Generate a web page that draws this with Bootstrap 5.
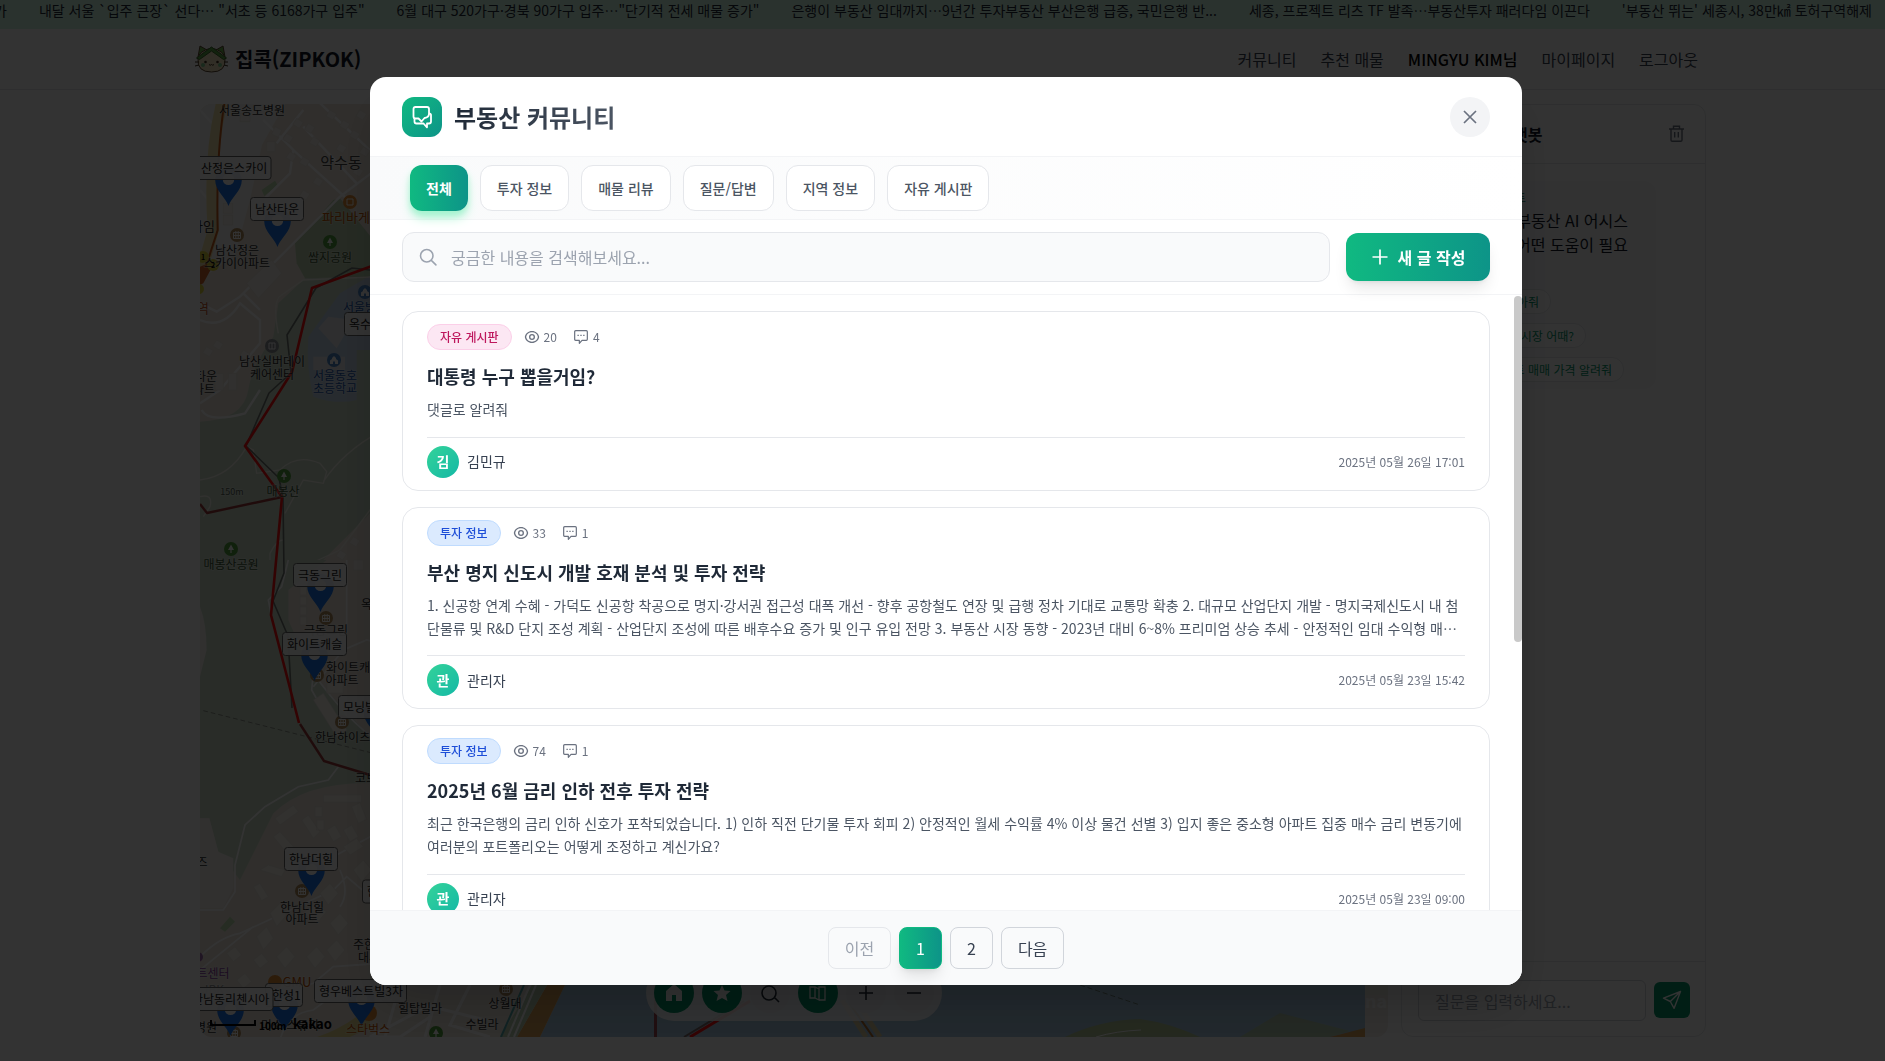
<!DOCTYPE html>
<html lang="ko">
<head>
<meta charset="utf-8">
<meta name="viewport" content="width=device-width, initial-scale=1">
<title>집콕(ZIPKOK)</title>
<link rel="stylesheet" href="https://cdn.jsdelivr.net/npm/bootstrap@5.3.0/dist/css/bootstrap.min.css">
<style>
:root{--kr:"Noto Sans CJK KR","Noto Sans",sans-serif}
body{font-family:var(--kr);height:100vh;overflow:hidden;background:#fff;color:#111827;line-height:1.5}
svg{display:block;flex:none}
.ticker{height:29px;background:#d1fae5;color:#1f2937;font-size:14px;line-height:20px;gap:32px;white-space:nowrap}
.ticker span:first-child{margin-left:-6px}
.topnav{height:61px;border-bottom:1px solid #e5e7eb;padding:0 187px 0 195px}
.brand-name{font-size:20px;font-weight:700;margin-left:7px}
.menu{gap:24px;font-weight:400;color:#374151}
.menu b{font-weight:500;color:#000}
.workspace{padding:14px 179px 24px 200px;height:971px;gap:13px}
.map-wrap{width:1188px;border-radius:12px;overflow:hidden;background:#f3efe8}
.map-wrap text{font-family:var(--kr)}
.chat{width:305px;border:1px solid #e5e7eb;border-radius:12px}
.chat-head{height:59px;border-bottom:1px solid #e5e7eb;padding:0 21px 1px 0}
.chat-head strong{margin-left:91px;font-size:16px}
.bubble{margin:17px 49px 0 17px;height:208px;background:#f9fafb;border-radius:12px;padding:8px 28px 8px 8px;text-align:right;line-height:24px}
.agent{font-size:12px;line-height:17px;color:#047857;padding-right:102px;margin-bottom:2px}
.chip-row{height:34px;display:flex;justify-content:flex-end}
.chip{border:1px solid #e5e7eb;border-radius:12px;background:#fff;height:25px;padding:0 11px;font-size:12px;line-height:23px;color:#059669;white-space:nowrap}
.chat-foot{height:75px;border-top:1px solid #e5e7eb;padding:17px 15px 15px 16px;gap:8px}
.ask{height:41px;border:1px solid #d1d5db;border-radius:6px;padding:0 8px;line-height:40px;color:#9ca3af}
.send{width:36px;height:36px;border-radius:6px;background:#059669}
.veil{position:fixed;inset:0;background:rgba(0,0,0,.8);padding:1px 0 0 7px}
.board{width:1152px;height:908px;background:#fff;border-radius:16px;overflow:hidden;box-shadow:0 25px 50px -12px rgba(0,0,0,.25)}
.board-head{height:80px;border-bottom:1px solid #f3f4f6;padding:1px 32px 0}
.mark-box{width:40px;height:40px;border-radius:12px;background:linear-gradient(135deg,#10b981,#0d9488)}
.board-title{font-size:24px;font-weight:700;line-height:32px;margin:0;background:linear-gradient(90deg,#1f2937,#4b5563);-webkit-background-clip:text;background-clip:text;color:transparent}
.round-x{width:40px;height:40px;border-radius:50%;background:#f3f4f6;color:#6b7280}
.tabs{height:63px;border-bottom:1px solid #f3f4f6;padding:8px 40px;gap:12px;background:linear-gradient(90deg,#f9fafb,#fff)}
.tab-b{height:46px;border:1px solid #e5e7eb;border-radius:12px;background:#fff;padding:0 16px;font-size:14px;font-weight:500;line-height:44px;color:#4b5563;white-space:nowrap}
.tab-b.on{border:0;line-height:46px;background:linear-gradient(90deg,#10b981,#0d9488);color:#fff;font-weight:700;box-shadow:0 4px 6px -1px #a7f3d0,0 8px 12px -2px #a7f3d0}
.finder{height:75px;border-bottom:1px solid #f3f4f6;padding:12px 32px;gap:16px}
.finder-in{height:50px;border:1px solid #e5e7eb;border-radius:12px;background:#f9fafb;color:#9ca3af;padding:0 15px;gap:13px}
.write{width:144px;height:48px;border-radius:12px;background:linear-gradient(90deg,#10b981,#0d9488);color:#fff;font-weight:700;gap:9px;box-shadow:0 10px 15px -3px rgba(0,0,0,.1),0 4px 6px -4px rgba(0,0,0,.1)}
.posts{height:615px;overflow:hidden;position:relative;padding:16px 32px;gap:16px}
.thumb{position:absolute;right:0;top:1px;width:8px;height:346px;border-radius:4px;background:#c9c9c9}
.post{border:1px solid #e5e7eb;border-radius:16px;padding:12px 24px;flex:none}
.cat{height:26px;border:1px solid;border-radius:13px;padding:0 12px;font-size:12px;font-weight:500;line-height:24px}
.cat-free{background:#fce7f3;border-color:#fbcfe8;color:#be185d}
.cat-inv{background:#dbeafe;border-color:#bfdbfe;color:#1d4ed8}
.stat{font-size:12px;line-height:16px;color:#6b7280;gap:4px}
.post h3{font-size:18px;line-height:28px;font-weight:700;color:#1f2937;margin:12px 0 8px}
.post p{font-size:14px;line-height:22.75px;color:#4b5563;margin:0 0 16px;display:-webkit-box;-webkit-line-clamp:2;-webkit-box-orient:vertical;overflow:hidden}
.by{border-top:1px solid #e5e7eb;padding-top:8px;font-size:14px;color:#374151}
.face{width:32px;height:32px;border-radius:50%;background:linear-gradient(135deg,#34d399,#14b8a6);color:#fff;font-weight:700;font-size:14px}
.when{font-size:12px;color:#6b7280}
.pager{height:75px;border-top:1px solid #f3f4f6;background:#f9fafb;gap:8px}
.pg{height:42px;border:1px solid #d1d5db;border-radius:8px;padding:0 16px;line-height:40px;color:#374151}
.pg.off{border-color:#e5e7eb;color:#9ca3af}
.pg.on{border-color:#10b981;background:linear-gradient(90deg,#10b981,#0d9488);color:#fff;box-shadow:0 10px 15px -3px rgba(0,0,0,.1),0 4px 6px -4px rgba(0,0,0,.1)}
</style>
</head>
<body>
<svg width="0" height="0" class="position-absolute">
  <symbol id="eye" viewBox="0 0 24 24"><path fill="currentColor" d="M12 3c5.392 0 9.878 3.88 10.819 9-.94 5.12-5.427 9-10.819 9-5.392 0-9.878-3.88-10.819-9C2.121 6.880 6.608 3 12 3zm0 16a9.005 9.005 0 0 0 8.777-7 9.005 9.005 0 0 0-17.554 0A9.005 9.005 0 0 0 12 19zm0-2.500a4.500 4.500 0 1 1 0-9 4.500 4.500 0 0 1 0 9zm0-2a2.500 2.500 0 1 0 0-5 2.500 2.500 0 0 0 0 5z"/></symbol>
  <symbol id="talk" viewBox="0 0 24 24"><g fill="none" stroke="currentColor" stroke-width="1.800" stroke-linejoin="round"><path d="M4 2.500h16q1.500 0 1.500 1.500v11.500q0 1.500-1.500 1.500h-6.500L9.500 21.500V17H4q-1.500 0-1.500-1.500V4Q2.500 2.500 4 2.500z"/><path d="M6.700 9.500h2M11 9.500h2M15.300 9.500h2"/></g></symbol>
  <symbol id="find" viewBox="0 0 24 24"><path fill="none" stroke="currentColor" stroke-width="1.900" stroke-linecap="round" d="M10.500 3a7.500 7.500 0 1 1 0 15 7.500 7.500 0 0 1 0-15zM16 16l5.500 5.500"/></symbol>
  <symbol id="pin" viewBox="0 0 28 40"><path fill="#1a73e8" d="M14 40C11 31 0 24 0 13a14 13 0 0 1 28 0c0 11-11 18-14 27z"/><circle cx="14" cy="12" r="6" fill="#fff"/></symbol>
  <symbol id="apt" viewBox="0 0 14 14"><circle cx="7" cy="7" r="7" fill="#b08a5c"/><path fill="none" stroke="#fff" d="M3.500 4.500h7v6h-7zM3.500 7.500h7M5.800 3v7M8.200 3v7"/></symbol>
  <symbol id="tree" viewBox="0 0 14 14"><circle cx="7" cy="7" r="7" fill="#4f9e3c"/><path fill="#fff" d="M7 2.500l3 5.500H7.600v3H6.400V8H4z"/></symbol>
  <symbol id="school" viewBox="0 0 14 14"><circle cx="7" cy="7" r="7" fill="#4a86c8"/><path fill="#fff" d="M7 3l2 2v1l2 1.500V11H8V8.500H6V11H3V7.500L5 6V5z"/></symbol>
</svg>

<div class="ticker d-flex">
  <span>가</span><span>내달 서울 `입주 큰장` 선다… "서초 등 6168가구 입주"</span><span>6월 대구 520가구·경북 90가구 입주…"단기적 전세 매물 증가"</span><span>은행이 부동산 임대까지…9년간 투자부동산 부산은행 급증, 국민은행 반...</span><span>세종, 프로젝트 리츠 TF 발족…부동산투자 패러다임 이끈다</span><span>'부동산 뛰는' 세종시, 38만㎢ 토허구역해제</span>
</div>

<nav class="topnav d-flex align-items-center">
  <svg width="33" height="28" viewBox="0 0 33 28"><path d="M3 12L5 1l7 4h9l7-4 2 11" fill="#6dbb51" stroke="#5b4630"/><path d="M3 14q0-8 13.500-11Q30 6 30 14q1 13-13.500 13T3 14z" fill="#f5e3bd" stroke="#5b4630"/><path d="M1.500 13L16.500 2l15 11-3 1.500L16.500 6l-12 8.500z" fill="#59a845" stroke="#3b6d2d"/><circle cx="10.500" cy="17" r="1.300" fill="#40301f"/><circle cx="22.500" cy="17" r="1.300" fill="#40301f"/><circle cx="8" cy="20" r="2" fill="#7fd091"/><circle cx="25" cy="20" r="2" fill="#7fd091"/><path d="M14 19.500q1.300 1.500 2.500 0 1.300 1.500 2.500 0M0 17h4M0 21l4-1M33 17h-4M33 21l-4-1" fill="none" stroke="#40301f"/></svg>
  <span class="brand-name me-auto">집콕(ZIPKOK)</span>
  <div class="menu d-flex"><span>커뮤니티</span><span>추천 매물</span><b>MINGYU KIM님</b><span>마이페이지</span><span>로그아웃</span></div>
</nav>

<main class="workspace d-flex">
  <div class="map-wrap">
  <svg width="1188" height="933" viewBox="200 104 1188 933">
    <rect x="200" y="104" width="1165" height="933" fill="#eee6dc"/>
    <path d="M200 104H285L262 145 250 200 235 255 200 280z" fill="#f6f5f2"/>
    <!-- parks -->
    <g transform="translate(180 90) scale(.33333)">
      <path d="M345 460L460 330 480 325 580 450V560L375 565 350 520z" fill="#bcd2af"/>
      <path d="M60 995Q190 990 205 900 215 830 280 740L295 640 375 565 600 560V1240L420 1420H60z" fill="#cbdcc8"/>
      <path d="M385 740L480 610 600 540V780L530 780V930Q470 945 400 920 378 830 385 740z" fill="#c4d6ea"/>
      <path d="M245 300l40-28 8 14-40 32z" fill="#bcdcae"/>
      <path d="M415 715l30-35 75 10-50 85zM400 800h95v40h-95z" fill="#e4e6e8"/>
      <g fill="none" stroke="#fff" stroke-width="7">
        <path d="M60 640L110 665 180 620 350 450 480 320 600 230M60 690Q130 720 180 640L240 690V760L120 900 60 940M65 960q20 40 130 10L240 900M230 350L330 250 340 180 250 90M340 180l60 55 110 100M370 110l160 170M410 30l180 170M290 160l80-100M60 60l50 55M60 300l50 60-20 160M190 610l50 50"/>
      </g>
      <g fill="none" stroke="#f5f3e9" stroke-width="4">
        <path d="M295 730q-20-100 10-115L370 570 600 560M60 1170q90-10 140-100l20 10 10 70 70-10q50-50 120-20l20 25-10 35-60-10-55 100M430 1175q60-90 170-150M60 1220q40-10 30 30l-20 30M600 1220L480 1380 350 1440M270 1440v-50q20-40 40-40"/>
      </g>
      <g fill="#f5efe8" stroke="#e0dad3" stroke-width="1.500">
        <path d="M180 70h30v25h-30zM260 155h25v30h-25zM285 110l20 10-10 22-20-10zM320 130l20 12-12 18-20-12zM350 85l20 12-12 18-20-12zM385 100l20 12-12 18-20-12zM400 140l20 12-12 18-20-12zM330 185l20 12-12 18-20-12zM370 200l20 12-12 18-20-12zM450 60l20 12-12 18-20-12zM490 90l20 12-12 18-20-12zM520 120l20 12-12 18-20-12zM540 60l20 12-12 18-20-12zM480 160l20 12-12 18-20-12zM550 170l20 12-12 18-20-12zM530 230l20 12-12 18-20-12zM410 260l20 12-12 18-20-12zM370 300l20 12-12 18-20-12zM330 345l20 12-12 18-20-12zM290 380l20 12-12 18-20-12zM130 340h28v30h-28zM130 375h28v30h-28zM200 580l75-70 30 40-70 75zM80 770l20 12-12 18-20-12zM110 750l20 12-12 18-20-12zM190 780l20 12-12 18-20-12zM105 850h25v50h-25zM145 850h25v50h-25zM430 1420l20 12-12 18-20-12zM480 1380l20 12-12 18-20-12zM520 1340l20 12-12 18-20-12zM520 1410h30v30h-30z"/>
      </g>
      <path d="M125 40Q85 200 100 420L60 560" fill="none" stroke="#efe2a8" stroke-width="34"/>
      <path d="M125 40Q100 200 105 420L60 560" fill="none" stroke="#c65a1c" stroke-width="6" transform="translate(8 0)"/>
      <path d="M60 530l48-20-38 70-10 5z" fill="#d2662a"/>
    </g>
    <g transform="translate(180 560) scale(.33333)">
      <path d="M60 0H440L325 90V180L400 350 600 560V670Q380 660 280 760L180 960 115 875 88 775H60z" fill="#cbdcc8"/>
      <path d="M60 140q20 50 20 130L60 350zM60 775h28l27 100 45 20v90l-30 60H60z" fill="#f2efe9"/>
      <g fill="none" stroke="#fff" stroke-width="5">
        <path d="M325 0l-20 80-40 40 10 50M600 550Q500 480 400 340l-5 50 40 70M475 620l-30 40-90 20-100 60-60 55-30 120v80l-35 55H60M60 1190q60-60 120-70l280-130 40-40 70 60M460 890l130-70M480 930q30 70 0 110M60 1230l160-130M600 1210l-140 10-60 50-80 20M300 1440q20-80 100-90l80-60h120"/>
        <path d="M400 380l90-110 70-30 40 10M500 0v220"/>
      </g>
      <g fill="#f7f2ea" stroke="#e0dad3" stroke-width="1.500">
        <path d="M285 775l55-40 15 20-55 40zM280 830l20-15 45 50-20 20zM365 780l20-15 35 50-20 20zM405 740h22v30h-22zM410 780h22v30h-22zM440 810l25-15 20 35-25 15zM490 810l25-15 20 35-25 15zM430 705h115v22H430zM515 740l25-12 20 50-25 12zM240 930l25-15 50 15-10 20zM220 980l20-10 25 40-20 12zM230 1130l30-30 20 35-30 35zM270 1060l30-30 20 35-30 35zM370 1060l30-30 40 25-30 35zM380 1190l30-30 25 30-30 35zM290 1190l30-30 25 30-30 35zM440 1170l30-30 25 30-30 35zM420 1000l30-30 25 30-30 35zM520 930l30-30 25 30-30 35zM450 1090l30-30 25 30-30 35zM490 860l40-25 20 25-40 25zM140 1180l25-20 20 25-25 20zM220 1200l25-20 20 25-25 20zM170 1260l25-20 20 25-25 20zM360 80h20v25h-20zM360 110h20v25h-20zM360 140h20v25h-20zM360 170h20v25h-20zM400 420l30-20 70 110-30 20zM440 370h50v30h-50z"/>
      </g>
      <path d="M120 1105l30-35 15 15-30 30z" fill="#bcdcae"/>
      <path d="M70 452L600 585" stroke="#8f938a" stroke-width="3" stroke-dasharray="14 9"/>
      <path d="M380 1440Q460 1420 530 1370L600 1330v60l-110 50z" fill="#e8dc92"/>
    </g>
    <!-- river and roads along the lower edge -->
    <path d="M370 985h195l-62 52H370z" fill="#eee8de"/>
    <path d="M565 985h800v52H540z" fill="#a8c8e0"/>
    <path d="M565 985l-25 52h-23l30-52z" fill="#dca258"/>
    <path d="M547 985l-30 52h-17l32-52z" fill="#bcd2b4"/>
    <path d="M524 985l-23 52" stroke="#52a8ac" stroke-width="2"/><path d="M530 985l-22 52M536 985l-22 52" stroke="#fff" stroke-width="2"/>
    <path d="M370 1037l60-32v12l-30 20zM400 985l-15 52M440 985l-15 52M425 1005l60 15M470 985l-20 40 40 12" fill="none" stroke="#fff" stroke-width="3"/>
    <path d="M1065 1037q35-17 75-18 30 4 60 18z" fill="#b6c99b"/><path d="M1096 1037q20-6 45-7" fill="none" stroke="#fff"/>
    <path d="M1280 1013l70 18-20 6h-90q20-12 40-24z" fill="#b4cbb0"/><path d="M1330 1037l35-9v9z" fill="#dca258"/>
    <path d="M1080 985l60 20" stroke="#72857e" stroke-dasharray="5 3"/>
    <path d="M842 1000l24 37M858 1004l22 33" stroke="#d9cba0" stroke-width="5"/><path d="M850 1004l23 33" stroke="#b06a2a" stroke-width="2"/>
    <!-- district boundary -->
    <g fill="none" stroke-linejoin="round">
      <path d="M370 270l-18-2-36 20-29 47 4 38-22 20-23 53 33 32 4 20 1 75-11 28 15 35 4 72" stroke="#6d7370" stroke-width="1.600"/>
      <path d="M200 504l7 9 75-16M300 724l24 37 46 14" stroke="#9c3a3a" stroke-width="2.400"/>
      <path d="M372 266l-60 22-20 84-47 74 37 51-11 118 28 108" stroke="#ff1010" stroke-width="2.600"/>
      <path d="M655.500 985v52" stroke="#a04852" stroke-width="3"/><path d="M750 1001l-60 36" stroke="#ff1010" stroke-width="3"/><path d="M744 1001l-60 36" stroke="#7d6b6b" stroke-width="2"/>
    </g>
    <!-- points of interest -->
    <use href="#pin" x="214.500" y="168" width="28" height="38"/><use href="#pin" x="263.500" y="209" width="28" height="38"/>
    <use href="#apt" x="230" y="228" width="14" height="14"/><use href="#tree" x="323" y="235" width="14" height="14"/>
    <use href="#school" x="358" y="285" width="14" height="14"/><use href="#school" x="327" y="353" width="14" height="14"/><use href="#tree" x="277" y="469" width="14" height="14"/><use href="#tree" x="224" y="542" width="14" height="14"/>
    <circle cx="350" cy="202" r="7" fill="#e08a35"/><path d="M347 199h6v6h-6z" fill="none" stroke="#fff"/>
    <circle cx="272" cy="346" r="7" fill="#8b9096"/><path d="M269 343h6v6h-6zM272 343v6" fill="none" stroke="#fff"/>
    <use href="#apt" x="319" y="611" width="14" height="14"/><use href="#pin" x="306.500" y="574" width="28" height="38"/><use href="#apt" x="310" y="668" width="14" height="14"/><use href="#pin" x="300.500" y="643" width="28" height="38"/>
    <use href="#apt" x="335" y="715" width="14" height="14"/><use href="#pin" x="363" y="700" width="28" height="38"/><use href="#apt" x="295" y="884" width="14" height="14"/><use href="#pin" x="297.500" y="858" width="28" height="38"/>
    <circle cx="275" cy="982" r="7" fill="#e08a35"/><circle cx="369" cy="1013" r="8" fill="#e08a35"/>
    <use href="#apt" x="227" y="1026" width="14" height="14"/><use href="#pin" x="216.500" y="998" width="28" height="38"/><use href="#pin" x="270.500" y="993" width="28" height="38"/><use href="#pin" x="347.500" y="988" width="28" height="38"/>
    <use href="#apt" x="499" y="982" width="14" height="14"/><use href="#tree" x="429" y="1026" width="14" height="14"/>
    <circle cx="203" cy="257" r="6" fill="#ddd23e"/><circle cx="213" cy="265" r="6" fill="#ddd23e"/><circle cx="199" cy="289" r="5" fill="#ddd23e"/><circle cx="198" cy="957" r="5" fill="#a06bb0"/>
    <g font-size="13" text-anchor="middle" fill="#2c2c2c" stroke="#fff" stroke-opacity=".35" stroke-width="1.500" paint-order="stroke">
      <text x="252" y="115" font-size="12">서울송도병원</text><text x="341" y="168" font-size="15" fill="#444">약수동</text>
      <text x="322" y="222" text-anchor="start" fill="#c25400">파리바게뜨</text><text x="330" y="262" fill="#3f5a38" font-size="12">쌈지공원</text>
      <text x="237" y="255" font-size="12">남산정은</text><text x="237" y="268" font-size="12">스카이아파트</text><text x="203" y="231">타임</text><text x="203" y="313" fill="#c65a2c">역</text>
      <text x="272" y="366" font-size="12">남산실버데이</text><text x="272" y="379" font-size="12">케어센터</text><text x="343" y="312" fill="#1d58ae" text-anchor="start" font-size="12">서울방송</text>
      <text x="335" y="380" fill="#1d58ae" font-size="12">서울동호</text><text x="335" y="393" fill="#1d58ae" font-size="12">초등학교</text>
      <text x="206" y="381" font-size="12">타운</text><text x="204" y="394" font-size="12">파트</text><text x="283" y="496" fill="#3f5a38" font-size="12">매봉산</text><text x="232" y="495" font-size="9" fill="#556052">150m</text><text x="231" y="569" fill="#3f5a38" font-size="12">매봉산공원</text>
      <text x="326" y="635" font-size="12">극동그린</text><text x="326" y="672" font-size="12" text-anchor="start">화이트캐슬</text><text x="342" y="685" font-size="12">아파트</text><text x="315" y="742" font-size="12" text-anchor="start">한남하이츠빌</text><text x="361" y="609" text-anchor="start" font-size="12">옥수</text><text x="355" y="783" text-anchor="start" font-size="12">코브라</text>
      <text x="302" y="912" font-size="12">한남더힐</text><text x="302" y="924" font-size="12">아파트</text><text x="202" y="867" font-size="12">즈</text><text x="213" y="978" fill="#8d3fa3" font-size="12">트센터</text><text x="297" y="987" fill="#c25400">GMU</text>
      <text x="353" y="949" text-anchor="start" font-size="12">주한라오스</text><text x="358" y="962" text-anchor="start" font-size="12">대사관</text><text x="206" y="1032" font-size="12">병원</text><text x="290" y="1030" font-size="12">미소 스튜라</text><text x="368" y="1034" fill="#c25400" font-size="12">스타벅스</text>
      <text x="420" y="1013" font-size="12">힐탑빌라</text><text x="505" y="1008" font-size="12">상월대</text><text x="482" y="1029" font-size="12">수빌라</text><text x="213" y="994" fill="#999" font-size="12">JBK</text>
    </g>
    <g font-size="7" text-anchor="middle" font-weight="700"><text x="203" y="260">1</text><text x="213" y="268">2</text></g>
    <g fill="#fff" fill-opacity=".92" stroke="#666">
      <rect x="160" y="156.500" width="111" height="23" rx="3"/><rect x="250.500" y="197.500" width="53" height="23" rx="3"/><rect x="344.500" y="312.500" width="60" height="23" rx="3"/><rect x="293.500" y="563.500" width="53" height="23" rx="3"/><rect x="282.500" y="632.500" width="64" height="23" rx="3"/><rect x="338.500" y="695.500" width="60" height="23" rx="3"/><rect x="284.500" y="847.500" width="53" height="23" rx="3"/><rect x="362.500" y="880" width="50" height="23" rx="3"/><rect x="265.500" y="983.500" width="37" height="23" rx="3"/><rect x="180" y="987.500" width="93" height="23" rx="3"/><rect x="314.500" y="979.500" width="92" height="23" rx="3"/>
    </g>
    <g font-size="12" fill="#222">
      <text x="201" y="173">산정은스카이</text><text x="255" y="214">남산타운</text><text x="349" y="329">옥수하이</text><text x="298" y="580">극동그린</text><text x="287" y="649">화이트캐슬</text><text x="343" y="712">모닝빌</text><text x="289" y="864">한남더힐</text><text x="367" y="896">한남</text><text x="272" y="1000">한성1</text><text x="192" y="1004">한남동리첸시아</text><text x="319" y="996">형우베스트빌3차</text>
    </g>
    <path d="M211 1020v5h44v-5" fill="none" stroke="#000" stroke-width="2"/><text x="259" y="1030" font-size="10" font-weight="700">100m</text><text x="293" y="1029" font-size="13" font-weight="700">kakao</text>
    <text x="1365" y="1008" font-size="18" font-weight="700" fill="#fff">nar</text>
    <!-- floating map tools -->
    <rect x="646" y="965" width="296" height="56" rx="28" fill="#fff" fill-opacity=".88"/>
    <g fill="#059669"><circle cx="674" cy="993" r="20"/><circle cx="722" cy="993" r="20"/><circle cx="818" cy="993" r="20"/></g><g fill="#f3f4f6"><circle cx="770" cy="993" r="20"/><circle cx="866" cy="993" r="20"/><circle cx="914" cy="993" r="20"/></g>
    <path d="M674 984l8 7v10h-6v-6h-4v6h-6v-10zM722 985l2.500 5.500 6 .5-4.500 4 1.500 6-5.500-3-5.500 3 1.500-6-4.500-4 6-.5z" fill="#fff"/>
    <path d="M810 987h5v11h-5zM815 987l4 2v11l-4-2M819 987h6v13h-6z" fill="none" stroke="#fff" stroke-width="1.300"/>
    <path d="M769 986a7 7 0 1 1 0 14 7 7 0 0 1 0-14zM774 997l5 5M859 993h14M866 986v14M907 993h14" fill="none" stroke="#1f2937" stroke-width="1.600"/>
  </svg>
  </div>
  <aside class="chat d-flex flex-column">
    <div class="chat-head d-flex align-items-center justify-content-between"><strong>AI 챗봇</strong>
      <svg width="15" height="17" viewBox="0 0 15 17" fill="none" stroke="#6b7280" stroke-width="1.400"><path d="M0 4h15M4.500 4V1.200h6V4M2 4v11q0 1.200 1.200 1.200h8.600q1.200 0 1.200-1.200V4M5.700 7v5.500M9.300 7v5.500"/></svg>
    </div>
    <div class="bubble"><div class="agent">집콕 AI 어시스턴트</div><div>안녕하세요! 부동산 AI 어시스<br>턴트입니다. 어떤 도움이 필요</div><div class="text-start ps-1">하신가요?</div>
      <div class="chip-row" style="margin:9px 77px 0 0"><span class="chip">매물 찾아줘</span></div>
      <div class="chip-row" style="margin-right:42px"><span class="chip">부동산 시장 어때?</span></div>
      <div class="chip-row" style="margin-right:4px"><span class="chip">아파트 매매 가격 알려줘</span></div>
    </div>
    <div class="chat-foot d-flex align-items-center mt-auto"><div class="ask flex-grow-1 ps-3">질문을 입력하세요...</div>
      <div class="send d-flex align-items-center justify-content-center"><svg width="20" height="20" viewBox="0 0 20 20" fill="none" stroke="#fff" stroke-width="1.400" stroke-linejoin="round"><path d="M18.500 1.500L1.500 8.200l6.800 3.300 3.800 6.800zM18.500 1.500L8.300 11.500"/></svg></div>
    </div>
  </aside>
</main>

<div class="veil d-flex align-items-center justify-content-center">
  <section class="board d-flex flex-column" role="dialog">
    <header class="board-head d-flex align-items-center justify-content-between">
      <div class="d-flex align-items-center" style="gap:12px">
        <span class="mark-box d-flex align-items-center justify-content-center"><svg width="24" height="24" viewBox="0 0 24 24" fill="none" stroke="#fff" stroke-width="1.800" stroke-linejoin="round"><path d="M7 13.500H5.500Q3.500 13.500 3.500 11.500V4q0-2 2-2H17q2 0 2 2v4.500q0 4-4.500 4.500L11.500 16.500 8.500 13.500z"/><path d="M4.500 13v3.500q0 2 2 2H13.500L17 22.300V18.500h2q2 0 2-2V10q0-1.500-2-1.500"/></svg></span>
        <h2 class="board-title">부동산 커뮤니티</h2>
      </div>
      <span class="round-x d-flex align-items-center justify-content-center"><svg width="14" height="14" viewBox="0 0 14 14" stroke="currentColor" stroke-width="1.700"><path d="M1 1l12 12M13 1L1 13"/></svg></span>
    </header>
    <div class="tabs d-flex"><span class="tab-b on">전체</span><span class="tab-b">투자 정보</span><span class="tab-b">매물 리뷰</span><span class="tab-b">질문/답변</span><span class="tab-b">지역 정보</span><span class="tab-b">자유 게시판</span></div>
    <div class="finder d-flex align-items-center">
      <div class="finder-in d-flex align-items-center flex-grow-1"><svg width="20" height="20"><use href="#find"/></svg><span>궁금한 내용을 검색해보세요...</span></div>
      <div class="write d-flex align-items-center justify-content-center"><svg width="18" height="18" viewBox="0 0 18 18" stroke="#fff" stroke-width="1.700"><path d="M1.500 9h15M9 1.500v15"/></svg><span>새 글 작성</span></div>
    </div>
    <div class="posts d-flex flex-column">
      <article class="post">
        <div class="d-flex align-items-center"><span class="cat cat-free">자유 게시판</span><span class="stat d-flex align-items-center ms-2 ps-1"><svg width="16" height="16"><use href="#eye"/></svg>20</span><span class="stat d-flex align-items-center ms-3"><svg width="16" height="16"><use href="#talk"/></svg>4</span></div>
        <h3>대통령 누구 뽑을거임?</h3>
        <p>댓글로 알려줘</p>
        <div class="by d-flex align-items-center gap-2"><span class="face d-flex align-items-center justify-content-center">김</span><span class="me-auto">김민규</span><span class="when">2025년 05월 26일 17:01</span></div>
      </article>
      <article class="post">
        <div class="d-flex align-items-center"><span class="cat cat-inv">투자 정보</span><span class="stat d-flex align-items-center ms-2 ps-1"><svg width="16" height="16"><use href="#eye"/></svg>33</span><span class="stat d-flex align-items-center ms-3"><svg width="16" height="16"><use href="#talk"/></svg>1</span></div>
        <h3>부산 명지 신도시 개발 호재 분석 및 투자 전략</h3>
        <p>1. 신공항 연계 수혜 - 가덕도 신공항 착공으로 명지·강서권 접근성 대폭 개선 - 향후 공항철도 연장 및 급행 정차 기대로 교통망 확충 2. 대규모 산업단지 개발 - 명지국제신도시 내 첨단물류 및 R&amp;D 단지 조성 계획 - 산업단지 조성에 따른 배후수요 증가 및 인구 유입 전망 3. 부동산 시장 동향 - 2023년 대비 6~8% 프리미엄 상승 추세 - 안정적인 임대 수익형 매물 선호도 증가 및 장기 투자 수요 확대</p>
        <div class="by d-flex align-items-center gap-2"><span class="face d-flex align-items-center justify-content-center">관</span><span class="me-auto">관리자</span><span class="when">2025년 05월 23일 15:42</span></div>
      </article>
      <article class="post">
        <div class="d-flex align-items-center"><span class="cat cat-inv">투자 정보</span><span class="stat d-flex align-items-center ms-2 ps-1"><svg width="16" height="16"><use href="#eye"/></svg>74</span><span class="stat d-flex align-items-center ms-3"><svg width="16" height="16"><use href="#talk"/></svg>1</span></div>
        <h3>2025년 6월 금리 인하 전후 투자 전략</h3>
        <p>최근 한국은행의 금리 인하 신호가 포착되었습니다. 1) 인하 직전 단기물 투자 회피 2) 안정적인 월세 수익률 4% 이상 물건 선별 3) 입지 좋은 중소형 아파트 집중 매수 금리 변동기에 여러분의 포트폴리오는 어떻게 조정하고 계신가요?</p>
        <div class="by d-flex align-items-center gap-2"><span class="face d-flex align-items-center justify-content-center">관</span><span class="me-auto">관리자</span><span class="when">2025년 05월 23일 09:00</span></div>
      </article>
      <div class="thumb"></div>
    </div>
    <footer class="pager d-flex align-items-center justify-content-center"><span class="pg off">이전</span><span class="pg on">1</span><span class="pg">2</span><span class="pg">다음</span></footer>
  </section>
</div>
<script src="https://cdn.jsdelivr.net/npm/bootstrap@5.3.0/dist/js/bootstrap.bundle.min.js"></script>
</body>
</html>
